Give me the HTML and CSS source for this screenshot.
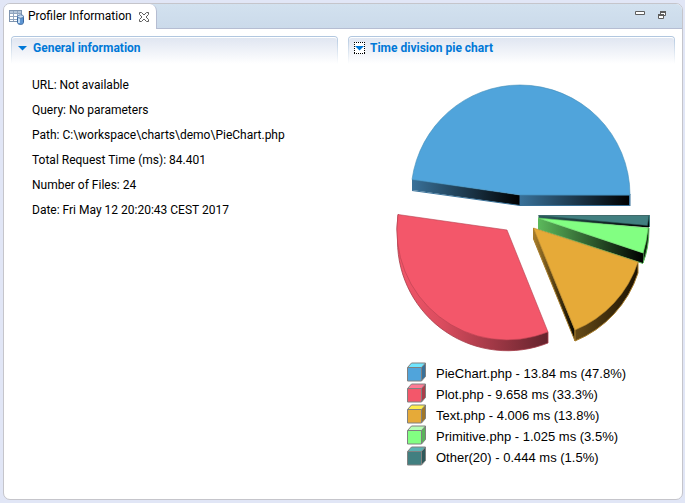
FILE: index.html
```html
<!DOCTYPE html>
<html lang="en">
<head>
<meta charset="utf-8">
<title>Profiler Information</title>
<link rel="stylesheet" href="styles.css">
</head>
<body>
<main class="view">
  <header class="tabbar">
    <div class="tab">
      <svg class="tab-icon" width="16" height="16" viewBox="0 0 16 16" aria-hidden="true">
        <rect x="0.500" y="1.500" width="12" height="11" fill="#fff" stroke="#7f95b0"/>
        <path d="M1 2h11v2H1z" fill="#b5c6da"/>
        <path d="M1 4.500h11M1 7.500h11M1 10.500h11M4.500 2v10M8.500 2v10" stroke="#91a5bf" fill="none"/>
        <path d="M8.500 7.500v6c0 2.600 6 2.600 6 0v-6z" fill="#5d95d2" stroke="#3c699f"/>
        <path d="M10 9v5" stroke="#c5def5" stroke-width="2"/>
        <ellipse cx="11.500" cy="7.500" rx="3" ry="1.700" fill="#c9dff5" stroke="#5379aa"/>
      </svg>
      <span>Profiler Information</span>
      <button class="icon-button" aria-label="Close">
        <svg width="12" height="12" viewBox="0 0 12 12"><path d="M1.500 1.500h2l2.500 2.500 2.500-2.500h2v2L8 6l2.500 2.500v2h-2L6 8l-2.500 2.500h-2v-2L4 6 1.500 3.500z" fill="#fff" stroke="#5e5e5e"/></svg>
      </button>
    </div>
    <div class="tools">
      <button class="icon-button" aria-label="Minimize">
        <svg width="10" height="10" viewBox="0 0 10 10"><path d="M.5.5h9v3h-9z" fill="#fff" stroke="#5e5e5e"/></svg>
      </button>
      <button class="icon-button" aria-label="Restore">
        <svg width="8" height="8" viewBox="0 0 8 8"><path d="M2.500.5h5v4h-5zM.5 3.500h5v4h-5z" fill="#fff" stroke="#5e5e5e"/><path d="M2 1h6M0 4h6" stroke="#5e5e5e" stroke-width="2"/></svg>
      </button>
    </div>
  </header>
  <div class="sections">
    <section>
      <h2 class="section-head">
        <button class="toggle"><svg width="11" height="12" viewBox="0 0 11 12" aria-hidden="true"><path d="M1 4h9L5.500 8.500z" fill="#0078d7"/></svg>General information</button>
      </h2>
      <ul class="facts">
        <li>URL: Not available</li>
        <li>Query: No parameters</li>
        <li>Path: C:\workspace\charts\demo\PieChart.php</li>
        <li>Total Request Time (ms): 84.401</li>
        <li>Number of Files: 24</li>
        <li>Date: Fri May 12 20:20:43 CEST 2017</li>
      </ul>
    </section>
    <section>
      <h2 class="section-head">
        <button class="toggle"><svg width="11" height="12" viewBox="0 0 11 12" aria-hidden="true"><path d="M0 0h11v12H0z" fill="#fff"/><path d="M0 .5h11M0 11.500h11M.5 0v12M10.500 0v12" stroke="#000" stroke-dasharray="1 1"/><path d="M1 4h9L5.500 8.500z" fill="#0078d7"/></svg>Time division pie chart</button>
      </h2>
      <figure class="chart">
        <svg class="pie" width="256" height="270" viewBox="396 83 256 270" role="img" aria-label="Time division by file">
          <defs>
            <linearGradient id="blue"><stop stop-color="#397199"/><stop offset="1" stop-color="#000"/></linearGradient>
            <linearGradient id="red"><stop stop-color="#f3576a"/><stop offset=".3" stop-color="#d94c5e"/><stop offset="1" stop-color="#64232c"/></linearGradient>
            <linearGradient id="gold"><stop stop-color="#a77c2a"/><stop offset="1" stop-color="#080600"/></linearGradient>
            <linearGradient id="rim"><stop stop-color="#674b17"/><stop offset="1" stop-color="#1b1203"/></linearGradient>
            <linearGradient id="green"><stop stop-color="#5cb95c"/><stop offset="1" stop-color="#000"/></linearGradient>
            <linearGradient id="teal"><stop stop-color="#2c5b5b"/><stop offset="1" stop-color="#000"/></linearGradient>
          </defs>
          <g stroke-linejoin="round">
            <path d="M412 179l108 16v10.500l-108-15.500z" fill="url(#blue)"/>
            <path d="M520 195h109.500v10.500H520z" fill="url(#blue)" stroke="#397199"/>
            <path d="M412 190.500l108 15M630 194v12" stroke="#397199"/>
            <path d="M520 195l-108-15.500A109 110 0 0 1 520 85 110 110 0 0 1 630 195z" fill="#50a4db" stroke="#438eb9" stroke-width=".6"/>

            <path d="M398 214.500A110 110 0 0 0 397.500 241 110 110 0 0 0 548 343v-11z" fill="url(#red)" stroke="#a43b48" stroke-width=".8"/>
            <path d="M507 230l-109-15.500A110 110 0 0 0 548 332z" fill="#f3576a" stroke="#b64150" stroke-width=".6"/>

            <path d="M538.500 215.500h110.500v12L538.500 219z" fill="url(#teal)"/>
            <path d="M538.500 215.500h110.500l-1.500 10z" fill="#417f80" stroke="#2c5b5b" stroke-width=".6"/>
            <path d="M649.500 215v12" stroke="#417f80"/>

            <path d="M648 228h1q0 20-6 35v-10z" fill="#102410" stroke="#5cb95c"/>
            <path d="M538 218l105 35v10.500L538 229z" fill="url(#green)"/>
            <path d="M538 229l105 34.500" stroke="#5cb95c"/>
            <path d="M538 218l110 10q-1 13-5 25z" fill="#82ff82" stroke="#62ca62" stroke-width=".6"/>

            <path d="M533.500 228l41.500 102v11l-41.500-102z" fill="url(#gold)" stroke="#a77c2a"/>
            <path d="M638 262v11A110 110 0 0 1 575 341v-11z" fill="url(#rim)" stroke="#a77c2a"/>
            <path d="M533.500 228L638 262A110 110 0 0 1 575 330z" fill="#e6aa38" stroke="#b98a2f" stroke-width=".6"/>
          </g>
        </svg>
        <svg width="0" height="0" class="shapes" aria-hidden="true">
          <symbol id="cube" viewBox="0 0 19 20">
            <path d="M.5 5.500L4.500 1h14l-4 4.500z" class="top"/>
            <path d="M14.500 5.500l4-4.500v13.500l-4 4.500z" class="side"/>
            <path d="M.5 5.500h14V19H.5z" fill="currentColor"/>
            <path d="M.5 5.500L4.500 1h14v13.500l-4 4.500H.5zh14V19M14.500 5.500l4-4.500" fill="none" stroke="#808080"/>
          </symbol>
        </svg>
        <ul class="legend">
          <li><svg class="cube blue"><use href="#cube"/></svg>PieChart.php - 13.84 ms (47.8%)</li>
          <li><svg class="cube red"><use href="#cube"/></svg>Plot.php - 9.658 ms (33.3%)</li>
          <li><svg class="cube gold"><use href="#cube"/></svg>Text.php - 4.006 ms (13.8%)</li>
          <li><svg class="cube green"><use href="#cube"/></svg>Primitive.php - 1.025 ms (3.5%)</li>
          <li><svg class="cube teal"><use href="#cube"/></svg>Other(20) - 0.444 ms (1.5%)</li>
        </ul>
      </figure>
    </section>
  </div>
</main>
</body>
</html>
```
FILE: styles.css
```css
* { box-sizing: border-box; }
body {
  margin: 0;
  min-height: 100vh;
  padding: 3px 2px 3px 3px;
  display: flex;
  background: #e1e6f6;
  color: #000;
  font: 12px/25px Roboto, "Open Sans", sans-serif;
}
ul, figure, h2 { margin: 0; padding: 0; list-style: none; }
svg { display: block; flex: none; }
button { border: 0; padding: 0; background: none; font: inherit; color: inherit; }
.view {
  flex: 1;
  min-width: 0;
  border: 1px solid #c5c5cb;
  border-radius: 7px;
  background: #fff;
  overflow: hidden;
}
.tabbar {
  display: flex;
  justify-content: space-between;
  height: 25px;
  background: linear-gradient(#d2e1ef, #cbdaea);
  box-shadow: inset 0 -1px #b5bdd2;
}
.tab {
  display: flex;
  align-items: center;
  padding: 0 6px 0 5px;
  border-right: 1px solid #b5bdd2;
  border-radius: 0 7px 0 0;
  background: #fff;
  white-space: nowrap;
}
.tab span { margin: 0 6px 0 3px; }
.tools { display: flex; gap: 13px; padding: 7px 16px 0 0; align-items: flex-start; }
.sections {
  display: grid;
  grid-template-columns: 1fr 1fr;
  gap: 10px;
  padding: 7px 7px 8px;
}
.section-head {
  height: 28px;
  border: 1px solid transparent;
  border-bottom: 0;
  border-radius: 4px 4px 0 0;
  background:
    linear-gradient(#dfe5f1, #fff) padding-box,
    linear-gradient(#b0c6df, #fff) border-box;
  box-shadow: inset 0 1px #fff;
  font-size: 12px;
}
.toggle {
  display: flex;
  align-items: center;
  gap: 5px;
  height: 22px;
  padding-left: 5px;
  color: #0078d7;
  font-weight: 700;
}
.facts { padding: 9px 21px; }
.chart { padding: 19px 0 0 48px; }
.legend {
  padding: 9px 0 0 11px;
  font: 13px/23px "Liberation Sans", sans-serif;
}
.legend li { display: flex; align-items: flex-start; gap: 10px; height: 21px; }
.cube { width: 19px; height: 20px; }
.shapes { position: absolute; }
.blue { color: #50a4db; --top: #70e6ff; --side: #397199; }
.red { color: #f3576a; --top: #ff7a94; --side: #aa3d4a; }
.gold { color: #e6aa38; --top: #ffee4e; --side: #a17727; }
.green { color: #82ff82; --top: #b6ffb6; --side: #5bb35b; }
.teal { color: #417f80; --top: #5bb2b3; --side: #2e595a; }
.top { fill: var(--top); }
.side { fill: var(--side); }
```
